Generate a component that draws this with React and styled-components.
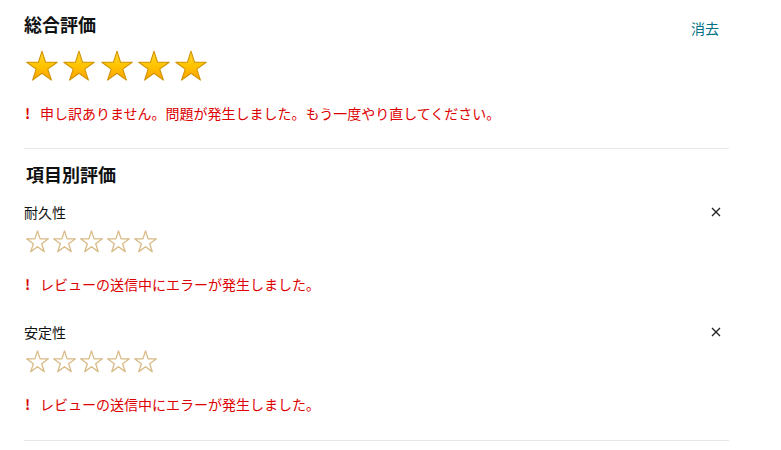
import React from "react";
import styled, { createGlobalStyle } from "styled-components";

const Global = createGlobalStyle`
  html, body { margin: 0; padding: 0; background: #fff; }
  body {
    font-family: "Noto Sans CJK JP", "Noto Sans", sans-serif;
    color: #0f1111;
  }
`;

const Page = styled.div`
  width: 705px;
  padding: 12px 0 0 24px;
`;

const HeaderRow = styled.div`
  display: flex;
  justify-content: space-between;
  align-items: flex-start;
`;

const Title = styled.h2`
  margin: 0;
  padding-left: ${(p) => (p.$indent ? "2px" : "0")};
  font-size: 18px;
  line-height: 24px;
  font-weight: 700;
  color: #0f1111;
`;

const ClearLink = styled.a`
  margin: 6px 10px 0 0;
  font-size: 14px;
  line-height: 20px;
  color: #007185;
  text-decoration: none;
  cursor: pointer;
`;

const StarRow = styled.div`
  display: flex;
  gap: ${(p) => p.$gap}px;
  margin-top: ${(p) => p.$top}px;
  padding-left: 1px;
  & > svg { display: block; }
`;

const ErrorLine = styled.div`
  display: flex;
  align-items: center;
  margin-top: ${(p) => p.$top}px;
  font-size: 14px;
  line-height: 20px;
  color: #dd0000;
`;

const Bang = styled.span`
  width: 16px;
  font-weight: 700;
  padding-left: 1px;
  box-sizing: border-box;
`;

const Divider = styled.hr`
  margin: ${(p) => p.$top}px 0 0;
  border: 0;
  height: 1px;
  background: #e7e7e7;
`;

const Section = styled.div`
  margin-top: 13px;
`;

const Item = styled.div`
  margin-top: ${(p) => p.$top}px;
`;

const ItemHead = styled.div`
  display: flex;
  justify-content: space-between;
  align-items: center;
`;

const ItemLabel = styled.span`
  font-size: 14px;
  line-height: 20px;
  color: #0f1111;
`;

const CloseButton = styled.button`
  width: 26px;
  height: 20px;
  padding: 0;
  border: 0;
  background: transparent;
  display: flex;
  align-items: center;
  justify-content: center;
  cursor: pointer;
`;

const STAR =
  "M17 1.2 L20.6 12.3 L32.2 12.3 L22.8 19.1 L26.4 30.1 L17 23.3 L7.6 30.1 L11.2 19.1 L1.8 12.3 L13.4 12.3 Z";

const FilledStar = ({ id }) => (
  <svg width="34" height="32" viewBox="0 0 34 32">
    <defs>
      <linearGradient id={id} x1="0" y1="0" x2="0" y2="1">
        <stop offset="0" stopColor="#ffd633" />
        <stop offset="0.5" stopColor="#ffc400" />
        <stop offset="1" stopColor="#ffa200" />
      </linearGradient>
    </defs>
    <path
      d={STAR}
      fill={`url(#${id})`}
      stroke="#cf9200"
      strokeWidth="1.1"
      strokeLinejoin="round"
    />
  </svg>
);

const EmptyStar = () => (
  <svg width="25" height="23" viewBox="0 0 34 32">
    <path
      d={STAR}
      fill="#fff"
      stroke="#d9bb85"
      strokeWidth="1.3"
      vectorEffect="non-scaling-stroke"
      strokeLinejoin="round"
    />
  </svg>
);

const CloseIcon = () => (
  <svg width="10" height="10" viewBox="0 0 10 10">
    <path d="M1 1 L9 9 M9 1 L1 9" stroke="#222" strokeWidth="1.3" />
  </svg>
);

const ErrorMessage = ({ top, children }) => (
  <ErrorLine $top={top}>
    <Bang>!</Bang>
    <span>{children}</span>
  </ErrorLine>
);

const AspectItem = ({ label, top }) => (
  <Item $top={top}>
    <ItemHead>
      <ItemLabel>{label}</ItemLabel>
      <CloseButton aria-label="clear">
        <CloseIcon />
      </CloseButton>
    </ItemHead>
    <StarRow $gap={2} $top={8}>
      {[0, 1, 2, 3, 4].map((i) => (
        <EmptyStar key={i} />
      ))}
    </StarRow>
    <ErrorMessage top={21}>レビューの送信中にエラーが発生しました。</ErrorMessage>
  </Item>
);

export default function App() {
  return (
    <>
      <Global />
      <Page>
        <HeaderRow>
          <Title>総合評価</Title>
          <ClearLink>消去</ClearLink>
        </HeaderRow>
        <StarRow $gap={3.3} $top={12}>
          {[0, 1, 2, 3, 4].map((i) => (
            <FilledStar key={i} id={`g${i}`} />
          ))}
        </StarRow>
        <ErrorMessage top={21}>
          申し訳ありません。問題が発生しました。もう一度やり直してください。
        </ErrorMessage>
        <Divider $top={25} />
        <Section>
          <Title $indent>項目別評価</Title>
          <AspectItem label="耐久性" top={16} />
          <AspectItem label="安定性" top={28} />
        </Section>
        <Divider $top={26} />
      </Page>
    </>
  );
}
